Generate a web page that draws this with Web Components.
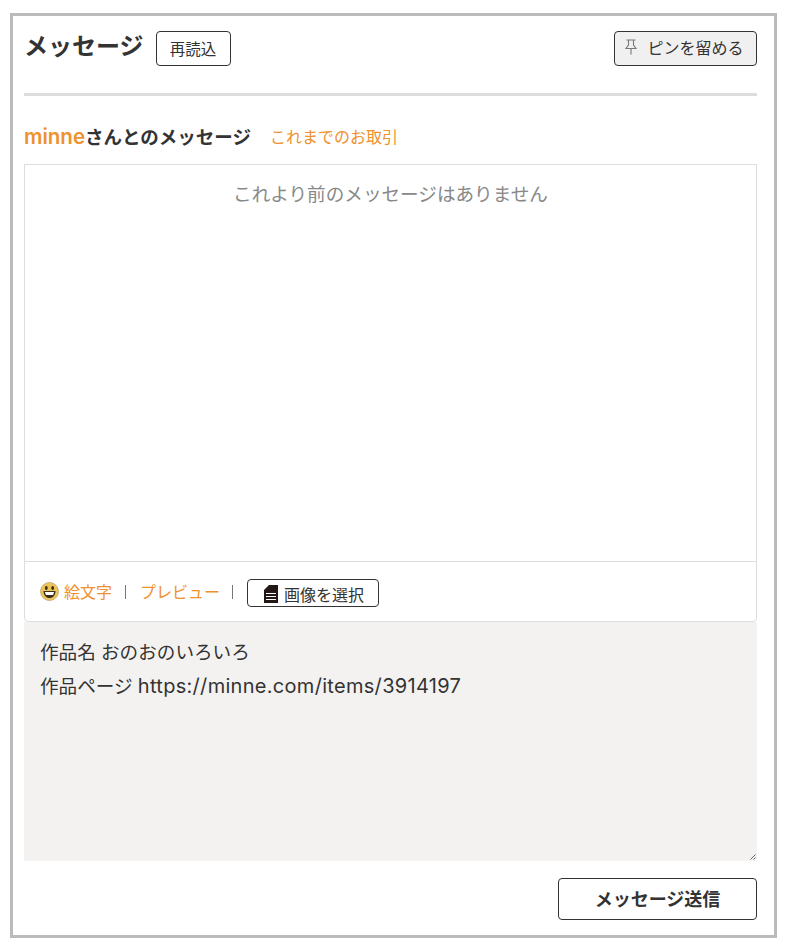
<!DOCTYPE html>
<html lang="ja">
<head>
<meta charset="utf-8">
<title>メッセージ</title>
<style>
  html, body { margin: 0; background: #fff; }
  body {
    padding: 13px 9px 14px 10px;
    font-family: Inter, "Noto Sans CJK JP", sans-serif;
    color: #333;
  }
</style>
</head>
<body>
<message-panel>
  <message-header slot="header"></message-header>
  <message-thread slot="thread" partner="minne"></message-thread>
  <message-toolbar slot="toolbar"></message-toolbar>
  <message-input slot="input"></message-input>
  <send-button slot="send">メッセージ送信</send-button>
</message-panel>

<script>
// Outer frame
class MessagePanel extends HTMLElement {
  constructor() {
    super();
    this.attachShadow({ mode: 'open' }).innerHTML = `
      <style>
        :host {
          display: block;
          box-sizing: border-box;
          width: 767px;
          height: 925px;
          padding: 15px 17px 15px 11px;
          border: 3px solid #bbb;
        }
      </style>
      <slot name="header"></slot>
      <slot name="thread"></slot>
      <slot name="toolbar"></slot>
      <slot name="input"></slot>
      <slot name="send"></slot>`;
  }
}

// Title row with the reload and pin buttons
class MessageHeader extends HTMLElement {
  constructor() {
    super();
    this.attachShadow({ mode: 'open' }).innerHTML = `
      <style>
        :host {
          display: flex;
          align-items: flex-start;
          box-sizing: border-box;
          height: 65px;
          border-bottom: 3px solid #ddd;
        }
        h1 {
          margin: 0 12px 0 0;
          font-size: 24px;
          line-height: 32px;
          font-weight: 700;
          color: #333;
        }
        button {
          box-sizing: border-box;
          font-family: inherit;
          color: #333;
          border: 1px solid #333;
          border-radius: 4px;
          background: #fff;
          padding: 0 0 2px;
          display: flex;
          align-items: center;
          justify-content: center;
        }
        .reload { width: 75px; height: 35px; font-size: 15.500px; }
        .pin {
          width: 143px;
          height: 35px;
          margin-left: auto;
          padding: 0 4px 3px 0;
          background: #f0f0f0;
          font-size: 16px;
          gap: 8px;
        }
        svg { width: 16px; height: 18px; display: block; }
      </style>
      <h1>メッセージ</h1>
      <button class="reload">再読込</button>
      <button class="pin">
        <svg viewBox="0 0 16 18" fill="none" stroke="#777" stroke-width="1.100">
          <path d="M3.500 2h9M5.500 2v5L3 10.500h10L10.500 7V2M8 10.500V16.500"/>
        </svg>
        <span>ピンを留める</span>
      </button>`;
  }
}

class MessageThread extends HTMLElement {
  constructor() {
    super();
    const partner = this.getAttribute('partner');
    this.attachShadow({ mode: 'open' }).innerHTML = `
      <style>
        :host { display: block; }
        .head {
          display: flex;
          align-items: center;
          height: 68px;
          box-sizing: border-box;
          padding-top: 12px;
        }
        h2 { margin: 0 19px 0 0; font-size: 18.500px; font-weight: 700; color: #333; }
        h2 b { color: #ee912e; font-size: 20.500px; font-weight: 600; }
        a { color: #ee912e; font-size: 16px; text-decoration: none; }
        .log {
          box-sizing: border-box;
          height: 397px;
          border: 1px solid #ddd;
          border-bottom: 0;
          padding-top: 16px;
          text-align: center;
          font-size: 18.600px;
          line-height: 26px;
          color: #888;
        }
      </style>
      <div class="head">
        <h2><b>${partner}</b>さんとのメッセージ</h2>
        <a href="#">これまでのお取引</a>
      </div>
      <div class="log">これより前のメッセージはありません</div>`;
  }
}

// Emoji, preview and image picker row
class MessageToolbar extends HTMLElement {
  constructor() {
    super();
    this.attachShadow({ mode: 'open' }).innerHTML = `
      <style>
        :host {
          display: flex;
          align-items: center;
          box-sizing: border-box;
          height: 61px;
          padding: 0 0 0 15px;
          border: 1px solid #ddd;
          border-radius: 0 0 4px 4px;
          font-size: 16px;
        }
        a { color: #ee912e; text-decoration: none; margin-bottom: 1px; }
        .emoji { display: flex; align-items: center; gap: 5px; }
        .sep { width: 1px; height: 14px; background: #777; margin: 0 14px 0 13px; }
        .sep.last { margin: 0 14px 0 12px; }
        svg { display: block; }
        button {
          display: flex;
          align-items: center;
          justify-content: center;
          gap: 6px;
          box-sizing: border-box;
          width: 132px;
          height: 28px;
          margin-top: 3px;
          padding: 2px 0 0 2px;
          border: 1px solid #333;
          border-radius: 4px;
          background: #fff;
          font-family: inherit;
          font-size: 16px;
          color: #333;
        }
      </style>
      <a class="emoji" href="#">
        <svg width="19" height="19" viewBox="0 0 19 19">
          <circle cx="9.500" cy="9.500" r="9" fill="#ecc356" stroke="#c9b27a" stroke-width="1"/>
          <ellipse cx="6.300" cy="6" rx="1.400" ry="2" fill="#3a2d1a"/>
          <ellipse cx="12.700" cy="6" rx="1.400" ry="2" fill="#3a2d1a"/>
          <path d="M3.500 9h12c0 4.300-2.500 7-6 7s-6-2.700-6-7z" fill="#3a2d1a"/>
          <path d="M5 10h9c-.2 1.500-.6 2.300-1 3H6c-.4-.7-.8-1.500-1-3z" fill="#fff"/>
        </svg>
        絵文字
      </a>
      <span class="sep"></span>
      <a href="#">プレビュー</a>
      <span class="sep last"></span>
      <button>
        <svg width="14" height="18" viewBox="0 0 14 18">
          <path d="M5 0h9v18H0V5z" fill="#231815"/>
          <path d="M2 8.500h10M2 11.500h10M2 14.500h10" stroke="#fff" stroke-width="1"/>
        </svg>
        <span>画像を選択</span>
      </button>`;
  }
}

// Prefilled message text. Editable box, because the latin run needs its own size
class MessageInput extends HTMLElement {
  constructor() {
    super();
    this.attachShadow({ mode: 'open' }).innerHTML = `
      <style>
        :host { display: block; position: relative; height: 239px; }
        .box {
          box-sizing: border-box;
          height: 239px;
          padding: 13px 16px;
          outline: 0;
          background: #f3f2f1;
          font-size: 18.600px;
          line-height: 34px;
          color: #333;
        }
        .url { font-size: 20px; letter-spacing: .3px; }
        svg { position: absolute; right: 1px; bottom: 1px; }
      </style>
      <div class="box" contenteditable="true" role="textbox">
        <div>作品名 おのおのいろいろ</div>
        <div>作品ページ <span class="url">https://minne.com/items/3914197</span></div>
      </div>
      <svg width="6" height="6" viewBox="0 0 6 6" stroke="#666" fill="none">
        <path d="M0.500 5.500L5.500 0.500M3.500 5.500L5.500 3.500"/>
      </svg>`;
  }
}

class SendButton extends HTMLElement {
  constructor() {
    super();
    this.attachShadow({ mode: 'open' }).innerHTML = `
      <style>
        :host { display: flex; justify-content: flex-end; padding-top: 17px; }
        button {
          box-sizing: border-box;
          width: 199px;
          height: 42px;
          padding: 0 0 2px;
          border: 1px solid #333;
          border-radius: 4px;
          background: #fff;
          font-family: inherit;
          font-size: 18px;
          font-weight: 700;
          color: #333;
        }
      </style>
      <button><slot></slot></button>`;
  }
}

customElements.define('message-panel', MessagePanel);
customElements.define('message-header', MessageHeader);
customElements.define('message-thread', MessageThread);
customElements.define('message-toolbar', MessageToolbar);
customElements.define('message-input', MessageInput);
customElements.define('send-button', SendButton);
</script>
</body>
</html>
